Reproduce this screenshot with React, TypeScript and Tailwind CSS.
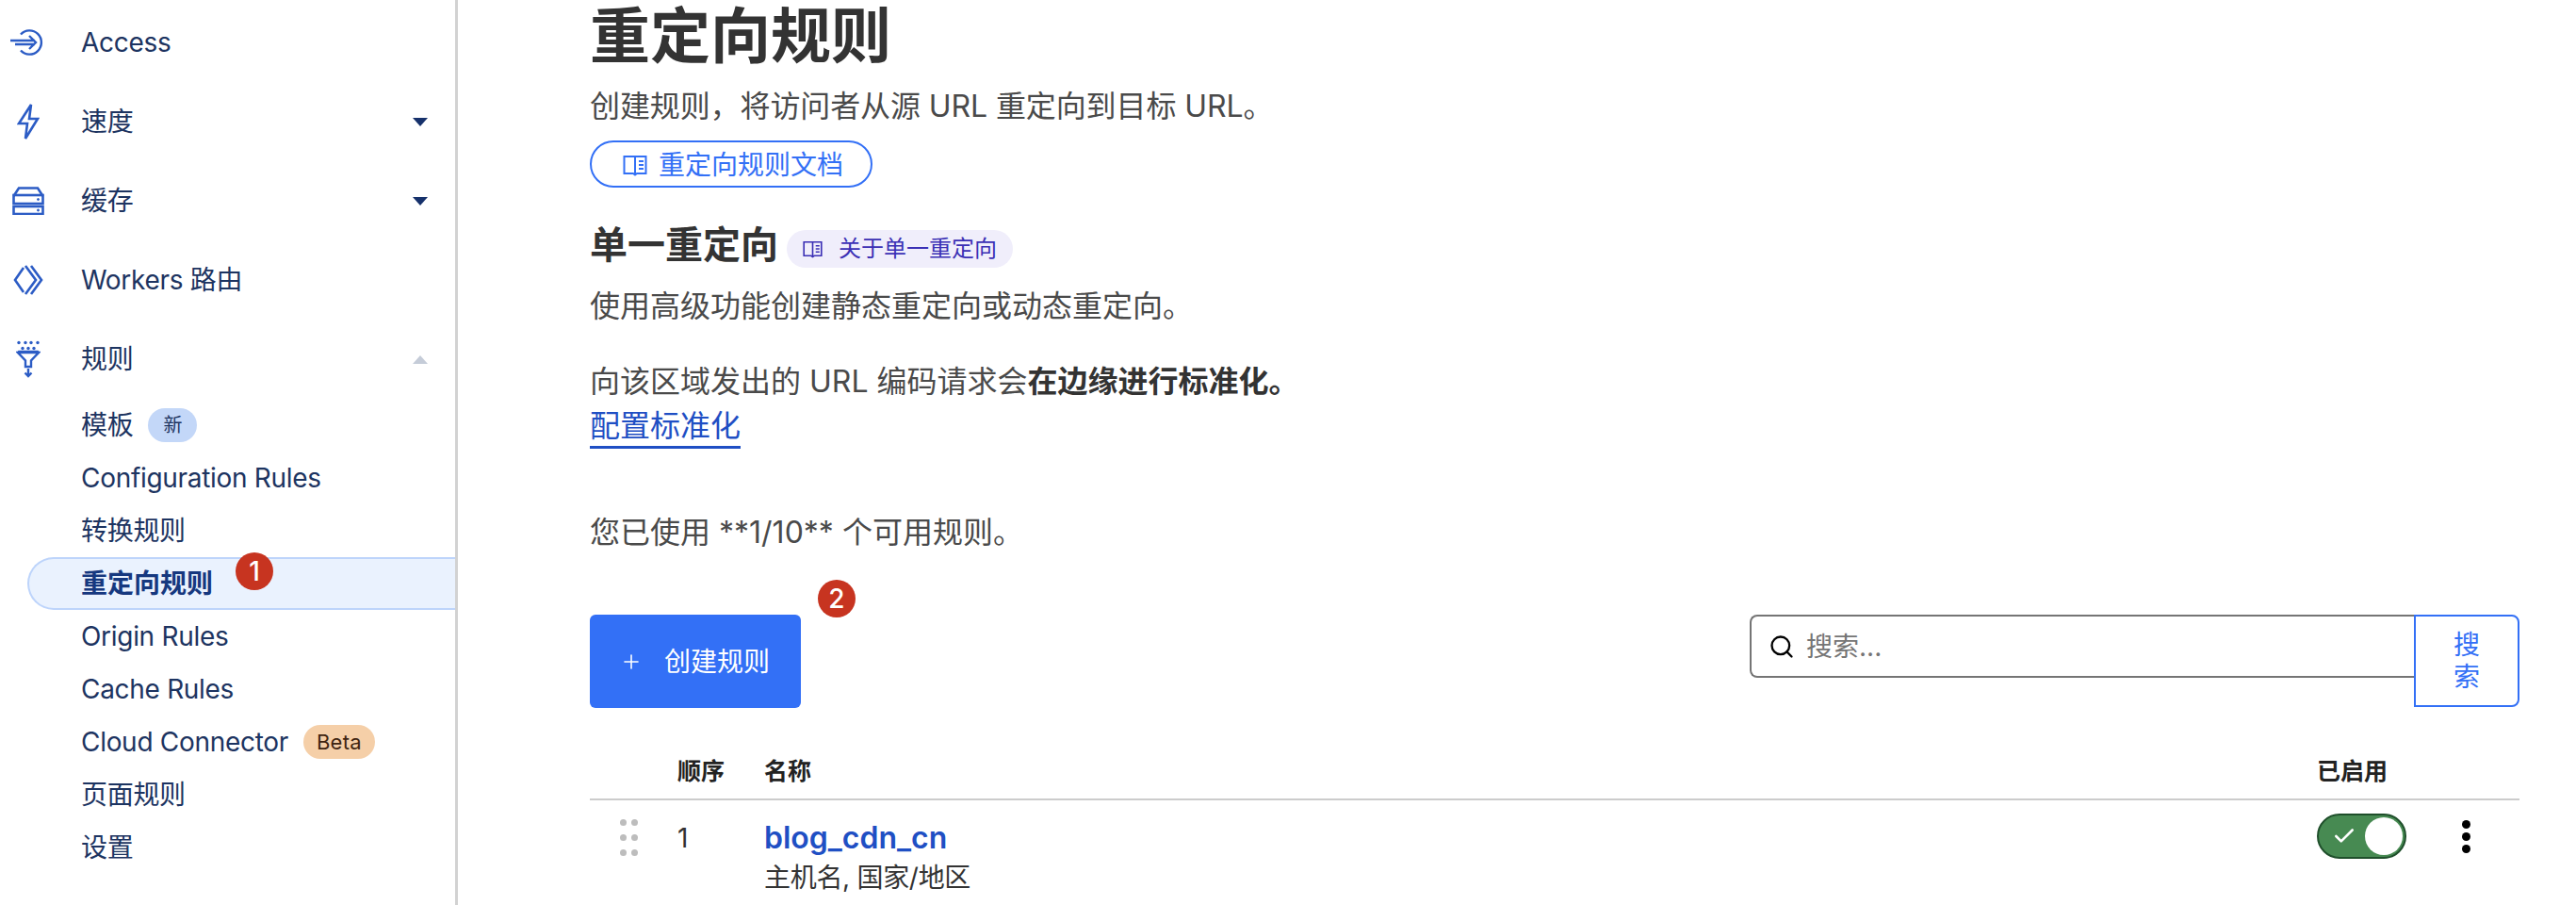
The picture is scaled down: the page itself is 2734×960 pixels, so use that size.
import React from 'react';
import { Plus, Check, Search } from 'lucide-react';

const fontStack = "font-[family-name:Inter,'Noto_Sans_CJK_SC',sans-serif]";

function AccessIcon() {
  return (
    <svg width="38" height="28" viewBox="0 0 38 28" fill="none" stroke="#2c5cc5" strokeWidth="2.4">
      <path d="M11 5.500A12.600 12.600 0 1 1 11 22.500" />
      <path d="M0 12h26M5 16h21M20 7l7 7-7 7" />
    </svg>
  );
}

function BoltIcon() {
  return (
    <svg width="24" height="40" viewBox="0 0 24 40" fill="none" stroke="#2c5cc5" strokeWidth="2.6" strokeLinejoin="miter">
      <path d="M15 2 2 22h9l-2 16 13-21h-9z" />
    </svg>
  );
}

function CacheIcon() {
  return (
    <svg width="34" height="30" viewBox="0 0 34 30" fill="none" stroke="#2c5cc5" strokeWidth="2.6">
      <path d="M1.500 10 7 1.500h20l5.500 8.500" />
      <rect x="1.500" y="9" width="31" height="9" />
      <rect x="1.500" y="21" width="31" height="8" />
      <circle cx="27.500" cy="13.500" r="1" fill="#2c5cc5" strokeWidth="1" />
      <circle cx="27.500" cy="25" r="1" fill="#2c5cc5" strokeWidth="1" />
    </svg>
  );
}

function WorkersIcon() {
  return (
    <svg width="32" height="32" viewBox="0 0 32 32" fill="none" stroke="#2c5cc5" strokeWidth="2.6">
      <path d="M11 3 2 16l9 13" />
      <path d="M13 1l11 15-11 15M19 1l11 15-11 15" />
    </svg>
  );
}

function RulesIcon() {
  return (
    <svg width="26" height="40" viewBox="0 0 26 40" fill="none" stroke="#2c5cc5" strokeWidth="2.4">
      <g fill="#2c5cc5" stroke="none">
        <circle cx="3" cy="2.500" r="1.700" />
        <circle cx="10" cy="2.500" r="1.700" />
        <circle cx="16" cy="2.500" r="1.700" />
        <circle cx="23" cy="2.500" r="1.700" />
        <circle cx="7" cy="8.500" r="1.700" />
        <circle cx="13" cy="8.500" r="1.700" />
        <circle cx="19" cy="8.500" r="1.700" />
      </g>
      <path d="M2 13h22L16 21.500V28h-6v-6.500zM2 13l1-1h20l1 1" />
      <path d="M13 30v8M9.500 34.500l3.500 3.500 3.500-3.500" />
    </svg>
  );
}

function BookIcon({ className, color }: { className: string; color: string }) {
  return (
    <svg className={className} viewBox="0 0 26 24" fill="none" stroke={color} strokeWidth="2">
      <path d="M13 3H1.500v18H11l2 1.500 2-1.500h9.500V3H15z" />
      <path d="M13 3v19" />
      <path d="M17 8h5M17 12h5M17 16h5" />
    </svg>
  );
}

function Caret({ up }: { up?: boolean }) {
  return (
    <div
      className={
        up
          ? 'w-0 h-0 border-x-[8px] border-x-transparent border-b-[9px] border-b-[#c5ccd8]'
          : 'w-0 h-0 border-x-[8px] border-x-transparent border-t-[9px] border-t-[#16316b]'
      }
    />
  );
}

function NavRow({ icon, label, caret }: { icon: React.ReactNode; label: string; caret?: 'up' | 'down' }) {
  return (
    <div className="flex items-center h-[84px]">
      <div className="w-[60px] flex justify-center shrink-0">{icon}</div>
      <span className="ml-[26px] text-[28px] tracking-[-0.3px] text-[#1d3461] flex-1">{label}</span>
      {caret && (
        <div className="mr-[29px]">
          <Caret up={caret === 'up'} />
        </div>
      )}
    </div>
  );
}

function SubRow({ children }: { children: React.ReactNode }) {
  return <div className="flex items-center h-[56px] pl-[86px] text-[28px] tracking-[-0.3px] text-[#1d3461]">{children}</div>;
}

function NumberBadge({ value, className }: { value: number; className: string }) {
  return (
    <div
      className={`absolute w-[40px] h-[40px] rounded-full bg-[#c73420] text-white text-[28px] font-medium flex items-center justify-center ${className}`}
    >
      {value}
    </div>
  );
}

function Sidebar() {
  return (
    <aside className="w-[486px] h-[960px] shrink-0 border-r-[3px] border-[#d2d2d2] pt-[3px]">
      <NavRow icon={<AccessIcon />} label="Access" />
      <NavRow icon={<BoltIcon />} label="速度" caret="down" />
      <NavRow icon={<CacheIcon />} label="缓存" caret="down" />
      <NavRow icon={<WorkersIcon />} label="Workers 路由" />
      <NavRow icon={<RulesIcon />} label="规则" caret="up" />
      <SubRow>
        模板
        <span className="ml-[16px] w-[52px] h-[36px] rounded-full bg-[#c3d7f8] text-[20px] flex items-center justify-center">
          新
        </span>
      </SubRow>
      <SubRow>Configuration Rules</SubRow>
      <SubRow>转换规则</SubRow>
      <div className="relative flex items-center h-[56px] ml-[29px] pl-[55px] rounded-l-full border-y-2 border-l-2 border-[#bdd4fb] bg-[#eaf2fe] text-[28px] font-semibold text-[#16387f]">
        重定向规则
        <NumberBadge value={1} className="left-[219px] top-[-7px]" />
      </div>
      <SubRow>Origin Rules</SubRow>
      <SubRow>Cache Rules</SubRow>
      <SubRow>
        Cloud Connector
        <span className="ml-[16px] w-[76px] h-[36px] rounded-full bg-[#f5cfa8] text-[22px] tracking-[0.3px] text-[#3f2410] flex items-center justify-center">
          Beta
        </span>
      </SubRow>
      <SubRow>页面规则</SubRow>
      <SubRow>设置</SubRow>
    </aside>
  );
}

function RulesTable() {
  return (
    <div>
      <div className="flex items-center h-[99px] pt-[40px] border-b-2 border-[#cccccc] text-[25px] font-semibold text-[#222222]">
        <span className="ml-[93px] w-[92px]">顺序</span>
        <span className="flex-1">名称</span>
        <span className="w-[215px]">已启用</span>
      </div>
      <div className="flex items-start pt-[13px]">
        <div className="ml-[32px] mt-[7px] w-[61px] shrink-0 grid grid-cols-[7px_7px] gap-x-[5px] gap-y-[9px]">
          {[0, 1, 2, 3, 4, 5].map((i) => (
            <span key={i} className="w-[7px] h-[7px] rounded-full bg-[#bdbdbd]" />
          ))}
        </div>
        <span className="w-[92px] text-[28px] leading-[54px] text-[#333333]">1</span>
        <div className="flex-1">
          <div className="text-[32px] leading-[54px] font-semibold text-[#1f4fc4]">blog_cdn_cn</div>
          <div className="text-[28px] leading-[30px] tracking-[-0.3px] text-[#333333]">主机名, 国家/地区</div>
        </div>
        <div className="w-[215px] flex items-start pt-[1px]">
          <button className="relative w-[95px] h-[48px] rounded-full bg-[#478a52] border-2 border-[#1f4f2b] flex items-center pl-[14px]">
            <Check className="w-[26px] h-[26px] text-white" strokeWidth={2.4} />
            <span className="absolute right-[2px] top-[2px] w-[40px] h-[40px] rounded-full bg-white" />
          </button>
          <div className="ml-[59px] mt-[7px] flex flex-col gap-[4px]">
            <span className="w-[9px] h-[9px] rounded-full bg-black" />
            <span className="w-[9px] h-[9px] rounded-full bg-black" />
            <span className="w-[9px] h-[9px] rounded-full bg-black" />
          </div>
        </div>
      </div>
    </div>
  );
}

export default function App() {
  return (
    <div className={`flex w-[2734px] h-[960px] overflow-hidden bg-white ${fontStack}`}>
      <Sidebar />
      <main className="flex-1 pl-[140px] pr-[60px] text-[32px] text-[#4a4a4a]">
        <h1 className="text-[64px] leading-[76px] font-semibold text-[#333333]">重定向规则</h1>
        <p className="mt-[13px] leading-[48px] tracking-[-0.1px]">创建规则，将访问者从源 URL 重定向到目标 URL。</p>
        <a className="mt-[12px] w-[300px] h-[50px] flex items-center pl-[33px] pt-[1px] gap-[12px] rounded-full border-2 border-[#3370f6] text-[28px] text-[#3370f6]">
          <BookIcon className="w-[26px] h-[24px] shrink-0" color="#3370f6" />
          重定向规则文档
        </a>
        <div className="mt-[35px] flex items-start">
          <h2 className="text-[40px] leading-[52px] font-semibold text-[#333333]">单一重定向</h2>
          <span className="ml-[9px] mt-[10px] w-[240px] h-[40px] rounded-full bg-[#f0eefb] flex items-center pl-[17px] gap-[17px] text-[24px] text-[#3b30b5]">
            <BookIcon className="w-[21px] h-[20px] shrink-0" color="#3b30b5" />
            关于单一重定向
          </span>
        </div>
        <p className="mt-[15px] leading-[48px]">使用高级功能创建静态重定向或动态重定向。</p>
        <p className="mt-[32px] leading-[48px]">
          向该区域发出的 URL 编码请求会<strong className="font-semibold text-[#333333]">在边缘进行标准化。</strong>
        </p>
        <a className="block w-fit mt-[2px] leading-[42px] border-b-[3px] border-[#1f4fc4] text-[#1f4fc4]">配置标准化</a>
        <p className="mt-[65px] leading-[48px]">您已使用 **1/10** 个可用规则。</p>
        <div className="mt-[63px] flex items-start justify-between h-[98px]">
          <button className="relative w-[224px] h-[99px] rounded-[6px] bg-[#3370f6] text-white text-[28px] flex items-center pl-[32px] gap-[23px]">
            <Plus className="w-[24px] h-[24px]" strokeWidth={1.6} />
            创建规则
            <NumberBadge value={2} className="left-[242px] top-[-37px]" />
          </button>
          <div className="flex items-start">
            <div className="w-[705px] h-[67px] flex items-center rounded-l-[8px] border-2 border-r-0 border-[#757575] pl-[18px]">
              <Search className="w-[28px] h-[28px] text-black" strokeWidth={2} />
              <input
                placeholder="搜索..."
                className="ml-[12px] flex-1 text-[28px] outline-none placeholder:text-[#757575]"
              />
            </div>
            <button className="w-[112px] h-[98px] px-[40px] rounded-r-[8px] border-2 border-[#3370f6] text-[28px] leading-[34px] text-[#3370f6]">
              搜索
            </button>
          </div>
        </div>
        <RulesTable />
      </main>
    </div>
  );
}
